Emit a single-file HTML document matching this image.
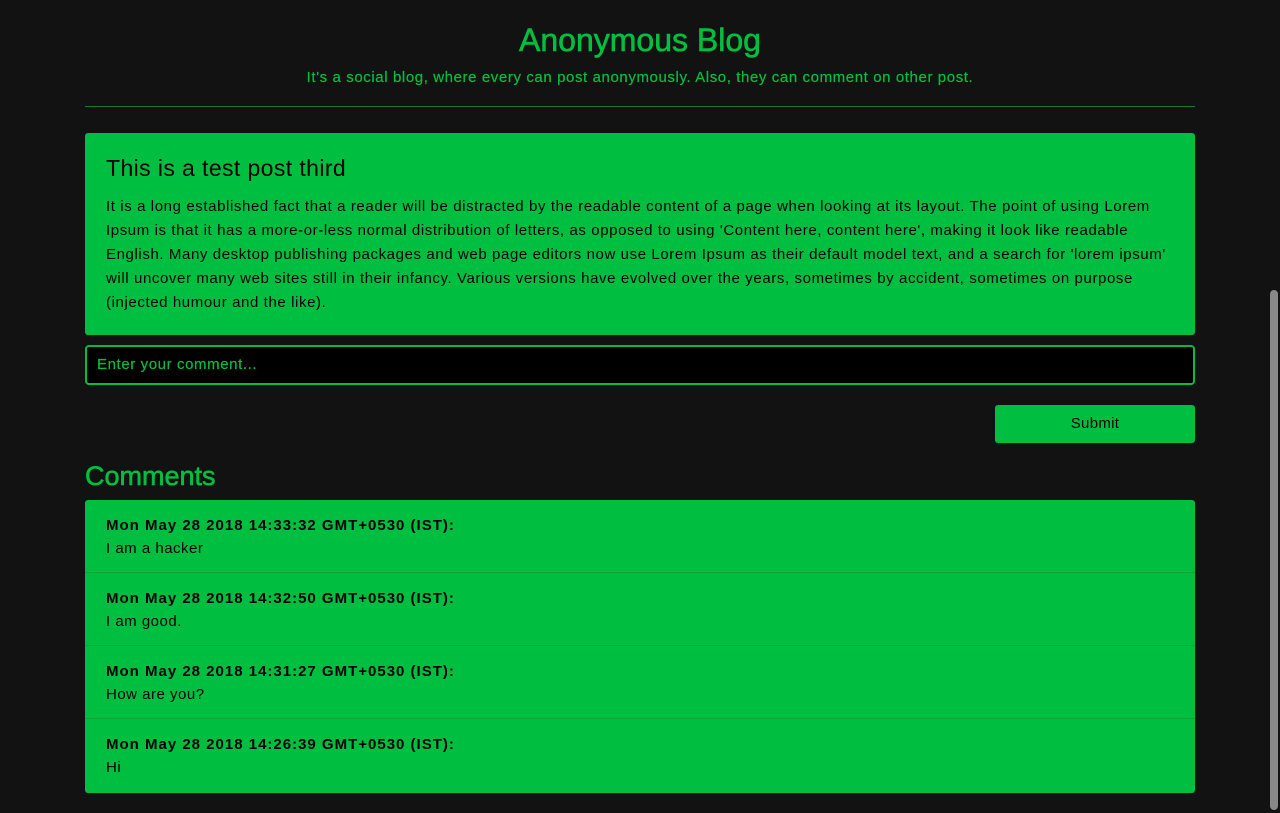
<!DOCTYPE html>
<html><head><style>
body{margin:0;background:#121212;font-family:"Liberation Sans",sans-serif;width:1280px;height:813px;overflow:hidden;position:relative}
div,p{box-sizing:border-box}
.a{position:absolute}
h1{position:absolute;top:20px;left:0;width:1280px;text-align:center;margin:0;font-size:32px;font-weight:normal;color:#00bf40;line-height:40px;-webkit-text-stroke:0.6px #00bf40}
.sub{top:68px;left:0;width:1280px;text-align:center;font-size:15px;color:#00bf40;line-height:20px;letter-spacing:.6px;-webkit-text-stroke:0.2px #00bf40}
.hr{top:106px;left:85px;width:1110px;height:1px;background:#1f7a1f}
.post{top:133px;left:85px;width:1110px;height:202px;background:#00bf40;border-radius:3px;padding:20px 21px}
.post h2{margin:0 0 12px;font-size:23px;font-weight:normal;line-height:30px;color:#000;letter-spacing:.4px}
.post p{margin:0;font-size:15px;line-height:24px;color:#000;letter-spacing:.6px}
.inp{top:345px;left:85px;width:1110px;height:40px;background:#000;border:2px solid #00bf40;border-radius:4px;color:#00bf40;font-size:15px;padding:0 10px;line-height:36px;letter-spacing:.6px;-webkit-text-stroke:0.2px #00bf40}
.btn{top:405px;left:995px;width:200px;height:38px;background:#00bf40;border-radius:3px;text-align:center;line-height:38px;font-size:15px;color:#000;letter-spacing:.3px}
.ch{top:458px;left:85px;font-size:27px;font-weight:normal;color:#00bf40;line-height:36px;-webkit-text-stroke:0.6px #00bf40}
.list{top:500px;left:85px;width:1110px;height:293px;background:#00bf40;border-radius:3px;overflow:hidden}
.it{height:73px;border-bottom:1px solid #0aa83c;padding:14px 21px;font-size:15px;line-height:23px;color:#000;letter-spacing:.5px}
.it b{letter-spacing:1px}
.it:last-child{border-bottom:none}
.sb{top:290px;left:1270px;width:8px;height:520px;background:#888;border-radius:4px}
</style></head><body>
<h1>Anonymous Blog</h1>
<div class="a sub">It's a social blog, where every can post anonymously. Also, they can comment on other post.</div>
<div class="a hr"></div>
<div class="a post"><h2>This is a test post third</h2><p>It is a long established fact that a reader will be distracted by the readable content of a page when looking at its layout. The point of using Lorem Ipsum is that it has a more-or-less normal distribution of letters, as opposed to using 'Content here, content here', making it look like readable English. Many desktop publishing packages and web page editors now use Lorem Ipsum as their default model text, and a search for 'lorem ipsum' will uncover many web sites still in their infancy. Various versions have evolved over the years, sometimes by accident, sometimes on purpose (injected humour and the like).</p></div>
<div class="a inp">Enter your comment...</div>
<div class="a btn">Submit</div>
<div class="a ch">Comments</div>
<div class="a list">
<div class="it"><b>Mon May 28 2018 14:33:32 GMT+0530 (IST):</b><br>I am a hacker</div>
<div class="it"><b>Mon May 28 2018 14:32:50 GMT+0530 (IST):</b><br>I am good.</div>
<div class="it"><b>Mon May 28 2018 14:31:27 GMT+0530 (IST):</b><br>How are you?</div>
<div class="it"><b>Mon May 28 2018 14:26:39 GMT+0530 (IST):</b><br>Hi</div>
</div>
<div class="a sb"></div>
</body></html>
